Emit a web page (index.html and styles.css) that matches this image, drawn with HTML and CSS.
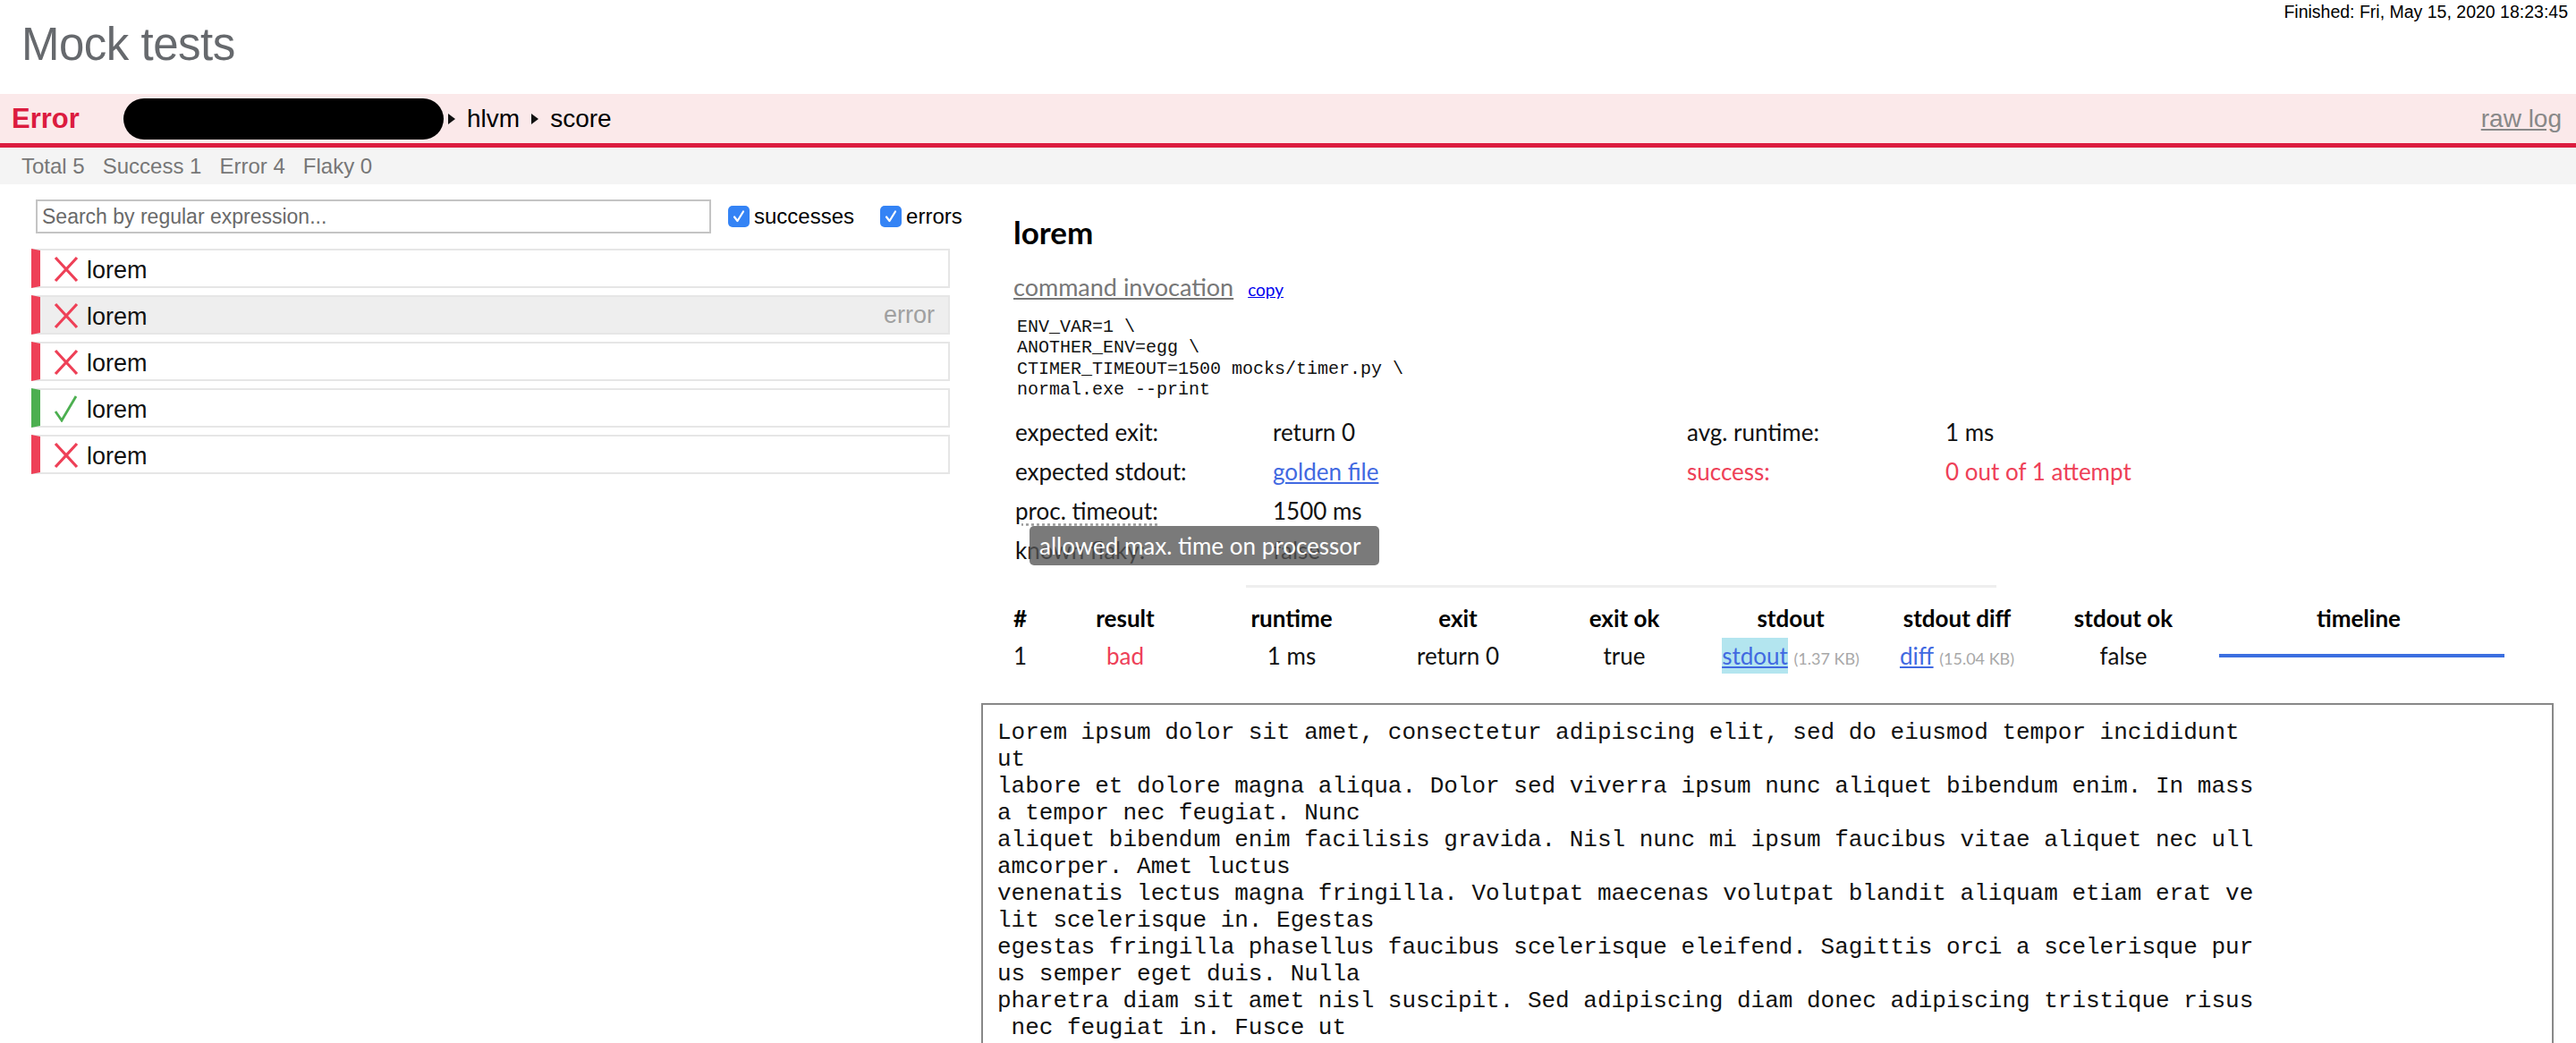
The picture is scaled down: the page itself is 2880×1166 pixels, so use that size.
FILE: index.html
```html
<!DOCTYPE html>
<html lang="en">
<head>
<meta charset="utf-8">
<title>Mock tests</title>
<link rel="stylesheet" href="styles.css">
</head>
<body>
<header class="top">
  <h1 class="title">Mock tests</h1>
  <div class="finished">Finished: Fri, May 15, 2020 18:23:45</div>
</header>

<div class="status">
  <span class="status-label">Error</span>
  <span class="redact"></span>
  <span class="caret caret-first"></span>
  <span class="crumb">hlvm</span>
  <span class="caret"></span>
  <span class="crumb">score</span>
  <a class="rawlog" href="#">raw log</a>
</div>

<div class="summary">
  <span>Total 5</span>
  <span>Success 1</span>
  <span>Error 4</span>
  <span>Flaky 0</span>
</div>

<main class="main">
  <section class="left">
    <div class="filters">
      <input class="search" type="text" placeholder="Search by regular expression...">
      <label class="check check-first"><span class="box"><svg viewBox="0 0 24 24" width="24" height="24"><polyline points="7,12.5 10.5,17 17,6.5" fill="none" stroke="#fff" stroke-width="2.2" stroke-linecap="round" stroke-linejoin="round"/></svg></span>successes</label>
      <label class="check"><span class="box"><svg viewBox="0 0 24 24" width="24" height="24"><polyline points="7,12.5 10.5,17 17,6.5" fill="none" stroke="#fff" stroke-width="2.2" stroke-linecap="round" stroke-linejoin="round"/></svg></span>errors</label>
    </div>
    <ul class="tests">
      <li class="test fail">
        <svg class="icon" viewBox="0 0 28 30" width="28" height="30"><path d="M2 2 L26 28 M26 2 L2 28" stroke="#ee4057" stroke-width="3.2" fill="none"/></svg>
        <span class="name">lorem</span>
      </li>
      <li class="test fail selected">
        <svg class="icon" viewBox="0 0 28 30" width="28" height="30"><path d="M2 2 L26 28 M26 2 L2 28" stroke="#ee4057" stroke-width="3.2" fill="none"/></svg>
        <span class="name">lorem</span>
        <span class="tag">error</span>
      </li>
      <li class="test fail">
        <svg class="icon" viewBox="0 0 28 30" width="28" height="30"><path d="M2 2 L26 28 M26 2 L2 28" stroke="#ee4057" stroke-width="3.2" fill="none"/></svg>
        <span class="name">lorem</span>
      </li>
      <li class="test pass">
        <svg class="icon" viewBox="0 0 28 30" width="28" height="30"><polyline points="2,18 9,28 25,1" stroke="#4caf50" stroke-width="2.8" fill="none"/></svg>
        <span class="name">lorem</span>
      </li>
      <li class="test fail">
        <svg class="icon" viewBox="0 0 28 30" width="28" height="30"><path d="M2 2 L26 28 M26 2 L2 28" stroke="#ee4057" stroke-width="3.2" fill="none"/></svg>
        <span class="name">lorem</span>
      </li>
    </ul>
  </section>

  <section class="right">
    <div class="detail">
      <h2 class="heading">lorem</h2>
      <div class="cmd-head">
        <a class="cmd-title" href="#">command invocation</a>
        <a class="copy" href="#">copy</a>
      </div>
      <pre class="cmd">ENV_VAR=1 \
ANOTHER_ENV=egg \
CTIMER_TIMEOUT=1500 mocks/timer.py \
normal.exe --print</pre>

      <div class="info">
        <span class="k">expected exit:</span><span class="v">return 0</span>
        <span class="k">avg. runtime:</span><span class="v">1 ms</span>
        <span class="k">expected stdout:</span><span class="v"><a class="link" href="#">golden file</a></span>
        <span class="k bad">success:</span><span class="v bad">0 out of 1 attempt</span>
        <span class="k"><abbr class="abbr" title="allowed max. time on processor">proc. timeout:</abbr></span><span class="v">1500 ms</span>
        <span class="k"></span><span class="v"></span>
        <span class="k">known flaky:</span><span class="v">false</span>
        <span class="k"></span><span class="v"></span>
        <div class="tooltip">allowed max. time on processor</div>
      </div>
    </div>

    <hr class="sep">

    <div class="detail">
      <div class="runs">
        <div class="th num">#</div>
        <div class="th">result</div>
        <div class="th">runtime</div>
        <div class="th">exit</div>
        <div class="th">exit ok</div>
        <div class="th">stdout</div>
        <div class="th">stdout diff</div>
        <div class="th">stdout ok</div>
        <div class="th">timeline</div>

        <div class="td num">1</div>
        <div class="td bad">bad</div>
        <div class="td">1 ms</div>
        <div class="td">return 0</div>
        <div class="td">true</div>
        <div class="td"><a class="link hl" href="#">stdout</a> <span class="size">(1.37 KB)</span></div>
        <div class="td"><a class="link" href="#">diff</a> <span class="size">(15.04 KB)</span></div>
        <div class="td">false</div>
        <div class="td timeline"><span class="bar"></span></div>
      </div>
    </div>

    <pre class="output">Lorem ipsum dolor sit amet, consectetur adipiscing elit, sed do eiusmod tempor incididunt
ut
labore et dolore magna aliqua. Dolor sed viverra ipsum nunc aliquet bibendum enim. In mass
a tempor nec feugiat. Nunc
aliquet bibendum enim facilisis gravida. Nisl nunc mi ipsum faucibus vitae aliquet nec ull
amcorper. Amet luctus
venenatis lectus magna fringilla. Volutpat maecenas volutpat blandit aliquam etiam erat ve
lit scelerisque in. Egestas
egestas fringilla phasellus faucibus scelerisque eleifend. Sagittis orci a scelerisque pur
us semper eget duis. Nulla
pharetra diam sit amet nisl suscipit. Sed adipiscing diam donec adipiscing tristique risus
 nec feugiat in. Fusce ut</pre>
  </section>
</main>
</body>
</html>
```

FILE: styles.css
```css
* { box-sizing: border-box; }

html, body {
  margin: 0;
  padding: 0;
  background: #fff;
}

body {
  font-family: "Liberation Sans", Arial, sans-serif;
  color: #111;
  width: 2880px;
  height: 1166px;
  overflow: hidden;
}

/* ---------- top header ---------- */
.top {
  display: flex;
  justify-content: space-between;
  align-items: flex-start;
  height: 105px;
}

.title {
  margin: 21px 0 0 24px;
  font-size: 51px;
  line-height: 58px;
  font-weight: 400;
  color: #66696d;
  letter-spacing: -0.5px;
}

.finished {
  margin: 2px 9px 0 0;
  font-size: 19.5px;
  line-height: 22px;
  color: #000;
}

/* ---------- status bar ---------- */
.status {
  display: flex;
  align-items: center;
  height: 60px;
  padding: 0 16px 0 13px;
  background: #fbe9ea;
  border-bottom: 5px solid #dc1c3f;
}

.status-label {
  width: 125px;
  font-size: 31px;
  font-weight: 700;
  color: #dc1c3f;
}

.redact {
  width: 358px;
  height: 46px;
  background: #000;
  border-radius: 23px;
}

.caret {
  width: 0;
  height: 0;
  border-left: 8px solid #111;
  border-top: 6px solid transparent;
  border-bottom: 6px solid transparent;
  margin: 0 13px 0 13px;
}

.caret-first {
  margin-left: 5px;
}

.crumb {
  font-size: 28px;
  color: #000;
}

.rawlog {
  margin-left: auto;
  font-size: 28px;
  color: #888;
  text-decoration: underline;
}

/* ---------- summary ---------- */
.summary {
  display: flex;
  align-items: center;
  gap: 20px;
  height: 41px;
  padding-left: 24px;
  background: #f4f4f4;
  font-size: 24px;
  color: #777;
}

/* ---------- main ---------- */
.main {
  display: flex;
  align-items: flex-start;
}

.left {
  width: 1097px;
  flex: none;
  padding: 17px 0 0 35px;
}

.filters {
  display: flex;
  align-items: center;
  height: 38px;
  margin-bottom: 17px;
}

.search {
  margin: 0 0 0 5px;
  width: 755px;
  height: 38px;
  padding: 0 0 0 5px;
  border: 2px solid #c4c4c4;
  font-family: "Liberation Sans", Arial, sans-serif;
  font-size: 23px;
  color: #333;
  background: #fff;
  outline: none;
}

.search::placeholder {
  color: #6a6a6a;
}

.check {
  display: flex;
  align-items: center;
  margin-left: 29px;
  font-size: 24px;
  color: #000;
}

.check-first {
  margin-left: 19px;
}

.box {
  display: flex;
  width: 24px;
  height: 24px;
  margin-right: 5px;
  border-radius: 5px;
  background: #3483f5;
}

.tests {
  list-style: none;
  margin: 0;
  padding: 0;
  width: 1027px;
}

.test {
  display: flex;
  align-items: center;
  height: 44px;
  margin-bottom: 8px;
  padding: 0 15px 0 15px;
  border: 2px solid #e6e6e6;
  border-left: 10px solid #ee4057;
  background: #fff;
}

.test.pass {
  border-left-color: #4caf50;
}

.test.selected {
  background: #eeeeee;
}

.icon {
  flex: none;
  margin-top: 2px;
}

.name {
  margin-left: 9px;
  font-size: 27px;
  color: #111;
  padding-top: 4px;
}

.tag {
  margin-left: auto;
  font-size: 27px;
  color: #a0a0a0;
}

/* ---------- right panel ---------- */
.right {
  width: 1758px;
  flex: none;
  font-family: "Lato", "Source Sans Pro", sans-serif;
}

.detail {
  padding-left: 36px;
}

.heading {
  margin: 33px 0 0 0;
  font-size: 35px;
  line-height: 40px;
  font-weight: 700;
  color: #000;
}

.cmd-head {
  display: flex;
  align-items: baseline;
  margin-top: 26px;
  height: 32px;
  line-height: 32px;
}

.cmd-title {
  font-size: 27px;
  color: #777;
  text-decoration: underline;
}

.copy {
  margin-left: 16px;
  font-size: 19px;
  color: #0000ee;
  text-decoration: underline;
}

.cmd {
  margin: 17px 0 0 4px;
  font-family: "Liberation Mono", "Courier New", monospace;
  font-size: 20px;
  line-height: 23.3px;
  color: #111;
}

.info {
  position: relative;
  display: grid;
  grid-template-columns: 288px 463px 289px 1fr;
  grid-auto-rows: 44px;
  align-items: center;
  margin-top: 14px;
  padding-left: 2px;
  font-size: 26px;
  color: #111;
}

.bad {
  color: #ee4057;
}

.link {
  color: #4169e1;
  text-decoration: underline;
}

.abbr {
  text-decoration: underline dotted #999;
  text-underline-offset: 4px;
}

.tooltip {
  position: absolute;
  left: 18px;
  top: 127px;
  width: 391px;
  height: 44px;
  padding-left: 11px;
  border-radius: 5px;
  background: rgba(85, 85, 85, 0.78);
  color: #fff;
  font-size: 26px;
  line-height: 44px;
  white-space: nowrap;
}

.sep {
  margin: 17px 0 0 296px;
  width: 839px;
  height: 3px;
  border: 0;
  background: #eeeeee;
}

.runs {
  display: grid;
  grid-template-columns: 32px repeat(7, 186px) 340px;
  grid-auto-rows: 42px;
  align-items: center;
  margin-top: 13px;
  font-size: 26px;
  color: #111;
}

.th {
  text-align: center;
  font-weight: 700;
  color: #000;
}

.td {
  text-align: center;
}

.num {
  text-align: left;
}

.hl {
  background: #b3e5ef;
  padding: 4px 0;
}

.size {
  font-size: 18px;
  color: #a8a8a8;
}

.timeline {
  display: flex;
  align-items: center;
}

.bar {
  display: block;
  width: 319px;
  height: 4px;
  margin-left: 14px;
  background: #3b6fe0;
}

.output {
  margin: 32px 0 0 0;
  padding: 16px 16px;
  border: 2px solid #888;
  font-family: "Liberation Mono", "Courier New", monospace;
  font-size: 26px;
  line-height: 30px;
  color: #111;
  white-space: pre;
  overflow: hidden;
}
```
